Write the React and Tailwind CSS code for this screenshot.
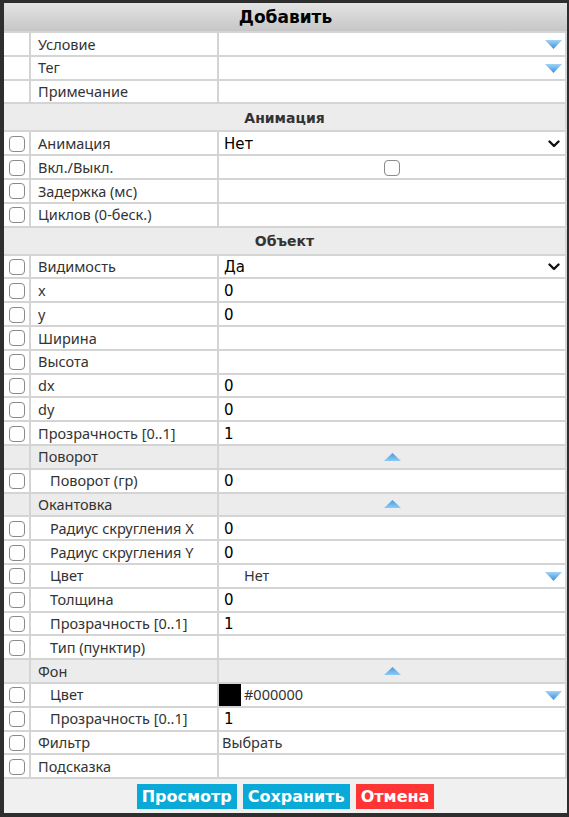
import React from 'react';

const font = { fontFamily: '"DejaVu Sans", Verdana, sans-serif' };
const labelFont = { fontFamily: '"Noto Sans", "DejaVu Sans", sans-serif' };

// blue sprite arrows used by the property grid
const ArrowDown = () => (
  <svg width="17" height="9" viewBox="0 0 17 9" className="shrink-0">
    <defs>
      <linearGradient id="gd" x1="0" y1="0" x2="0" y2="1">
        <stop offset="0" stopColor="#9fd3f7" />
        <stop offset="1" stopColor="#3b8fdd" />
      </linearGradient>
    </defs>
    <polygon points="0,0 17,0 8.5,9" fill="url(#gd)" />
  </svg>
);

const ArrowUp = () => (
  <svg width="17" height="8" viewBox="0 0 17 8">
    <defs>
      <linearGradient id="gu" x1="0" y1="0" x2="0" y2="1">
        <stop offset="0" stopColor="#4a9be0" />
        <stop offset="1" stopColor="#8ccaf4" />
      </linearGradient>
    </defs>
    <polygon points="8.5,0 17,8 0,8" fill="url(#gu)" />
  </svg>
);

const Chevron = () => (
  <svg width="12" height="8" viewBox="0 0 12 8" className="shrink-0">
    <polyline points="1.5,1.5 6,6 10.5,1.5" fill="none" stroke="#111" strokeWidth="2.4" strokeLinecap="round" strokeLinejoin="round" />
  </svg>
);

const Box = () => (
  <span className="block w-[16px] h-[16px] rounded-[4px] border-[1.5px] border-[#8a8a8a] bg-white" />
);

const rows = [
  { label: 'Условие', noCheck: true, kind: 'arrow' },
  { label: 'Тег', noCheck: true, kind: 'arrow' },
  { label: 'Примечание', noCheck: true },
  { section: 'Анимация' },
  { label: 'Анимация', kind: 'select', value: 'Нет' },
  { label: 'Вкл./Выкл.', kind: 'check' },
  { label: 'Задержка (мс)' },
  { label: 'Циклов (0-беск.)' },
  { section: 'Объект' },
  { label: 'Видимость', kind: 'select', value: 'Да' },
  { label: 'x', value: '0' },
  { label: 'y', value: '0' },
  { label: 'Ширина' },
  { label: 'Высота' },
  { label: 'dx', value: '0' },
  { label: 'dy', value: '0' },
  { label: 'Прозрачность [0..1]', value: '1' },
  { group: 'Поворот' },
  { label: 'Поворот (гр)', indent: true, value: '0' },
  { group: 'Окантовка' },
  { label: 'Радиус скругления X', indent: true, value: '0' },
  { label: 'Радиус скругления Y', indent: true, value: '0' },
  { label: 'Цвет', indent: true, kind: 'color', value: 'Нет' },
  { label: 'Толщина', indent: true, value: '0' },
  { label: 'Прозрачность [0..1]', indent: true, value: '1' },
  { label: 'Тип (пунктир)', indent: true },
  { group: 'Фон' },
  { label: 'Цвет', indent: true, kind: 'color', value: '#000000', swatch: true },
  { label: 'Прозрачность [0..1]', indent: true, value: '1' },
  { label: 'Фильтр', kind: 'muted', value: 'Выбрать' },
  { label: 'Подсказка' },
];

const Value = ({ row }) => {
  switch (row.kind) {
    case 'arrow':
      return (
        <div className="flex h-full items-center justify-end pr-[3px] pt-[1px]">
          <ArrowDown />
        </div>
      );
    case 'select':
      return (
        <div className="flex h-full items-center justify-between pl-[5px] pr-[5px] pt-[2px] text-[15px] text-black">
          <span>{row.value}</span>
          <Chevron />
        </div>
      );
    case 'check':
      return (
        <div className="flex h-full items-center justify-center pt-[1px]">
          <Box />
        </div>
      );
    case 'color':
      return (
        <div className="flex h-full items-center">
          <span className={`h-full w-[22px] shrink-0 ${row.swatch ? 'bg-black' : ''}`} />
          <span className="ml-[3px] flex-1 pt-[1px] text-[14.5px] text-[#333]" style={labelFont}>{row.value}</span>
          <span className="pr-[3px] pt-[7px] self-start">
            <ArrowDown />
          </span>
        </div>
      );
    case 'muted':
      return (
        <div className="flex h-full items-center pl-[3px] pt-[1px] text-[14.5px] text-[#333]" style={labelFont}>
          {row.value}
        </div>
      );
    default:
      return row.value ? (
        <div className="flex h-full items-center pl-[5px] pt-[2px] text-[15px] text-black">{row.value}</div>
      ) : null;
  }
};

const Row = ({ row }) => {
  if (row.section) {
    return (
      <div className="flex h-[28px] items-center justify-center border-b-2 border-[#d4d4d4] bg-[#ececec] pt-[2px] text-[14px] font-bold text-[#333]">
        {row.section}
      </div>
    );
  }

  if (row.group) {
    return (
      <div className="flex h-[23.8px] border-b-2 border-[#d4d4d4] bg-[#ececec]">
        <div className="w-[27px] shrink-0 border-r-2 border-[#d4d4d4]" />
        <div
          className="flex w-[188px] shrink-0 items-center border-r-2 border-[#d4d4d4] pl-[7px] pt-[1px] text-[14.5px] text-[#333]"
          style={labelFont}
        >
          {row.group}
        </div>
        <div className="flex flex-1 items-center justify-center">
          <ArrowUp />
        </div>
      </div>
    );
  }

  return (
    <div className="flex h-[23.8px] border-b-2 border-[#d4d4d4] bg-white">
      <div className="flex w-[27px] shrink-0 items-center justify-center border-r-2 border-[#d4d4d4] pt-[1px]">
        {!row.noCheck && <Box />}
      </div>
      <div
        className={`flex w-[188px] shrink-0 items-center border-r-2 border-[#d4d4d4] pt-[1px] text-[14.5px] text-[#333] ${
          row.indent ? 'pl-[19px]' : 'pl-[7px]'
        }`}
        style={labelFont}
      >
        {row.label}
      </div>
      <div className="min-w-0 flex-1">
        <Value row={row} />
      </div>
    </div>
  );
};

const App = () => {
  return (
    <div className="h-[817px] w-[569px] bg-[#2e2e2e] pt-[3px] pl-[4px] pr-[2px] pb-[4px]" style={font}>
      <div className="flex h-full flex-col bg-[#f0f0f0]">
        <div className="flex h-[30px] items-center justify-center border-b-2 border-[#d4d4d4] bg-gradient-to-b from-[#e4e4e4] to-[#c6c6c6] pt-[2px] text-[17px] font-bold text-black">
          Добавить
        </div>
        <div className="border-r-2 border-[#d4d4d4]">
          {rows.map((row, i) => (
            <Row key={i} row={row} />
          ))}
        </div>
        <div className="flex flex-1 items-start justify-center gap-[6px] pt-[5px]">
          <button className="h-[25px] bg-[#09aad8] px-[5px] pt-[1px] text-[16px] font-bold text-white">Просмотр</button>
          <button className="h-[25px] bg-[#09aad8] px-[5px] pt-[1px] text-[16px] font-bold text-white">Сохранить</button>
          <button className="h-[25px] bg-[#ff3535] px-[5px] pt-[1px] text-[16px] font-bold text-white">Отмена</button>
        </div>
      </div>
    </div>
  );
};

export default App;
